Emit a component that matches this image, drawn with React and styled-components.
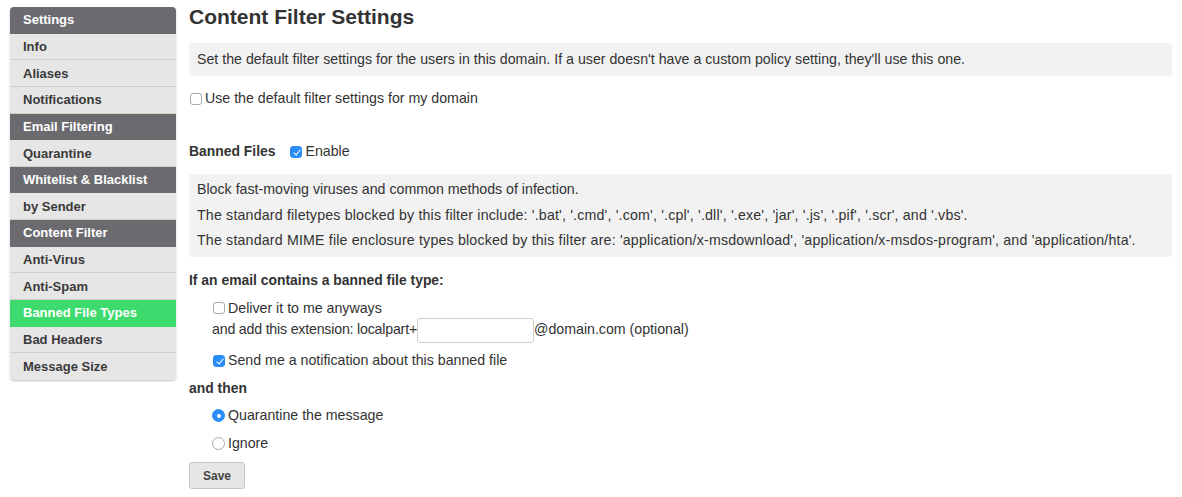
import React from 'react';
import styled, { createGlobalStyle } from 'styled-components';

const GlobalStyle = createGlobalStyle`
  body {
    margin: 0;
    background: #ffffff;
    font-family: "Liberation Sans", Arial, Helvetica, sans-serif;
    color: #333333;
  }
`;

const menu = [
  { label: 'Settings', kind: 'head' },
  { label: 'Info' },
  { label: 'Aliases' },
  { label: 'Notifications' },
  { label: 'Email Filtering', kind: 'head' },
  { label: 'Quarantine' },
  { label: 'Whitelist & Blacklist', kind: 'head' },
  { label: 'by Sender' },
  { label: 'Content Filter', kind: 'head' },
  { label: 'Anti-Virus' },
  { label: 'Anti-Spam' },
  { label: 'Banned File Types', kind: 'active' },
  { label: 'Bad Headers' },
  { label: 'Message Size' },
];

function App() {
  return (
    <>
      <GlobalStyle />
      <Page>
        <Sidebar>
          {menu.map((item) => (
            <MenuItem key={item.label} kind={item.kind}>{item.label}</MenuItem>
          ))}
        </Sidebar>

        <Main>
          <Title>Content Filter Settings</Title>
          <InfoBox>
            Set the default filter settings for the users in this domain. If a user doesn't have a custom policy setting, they'll use this one.
          </InfoBox>

          <CheckLabel>
            <Check type="checkbox" />
            Use the default filter settings for my domain
          </CheckLabel>

          <SectionHead>
            <Strong>Banned Files</Strong>
            <CheckLabel>
              <Check type="checkbox" defaultChecked />
              Enable
            </CheckLabel>
          </SectionHead>

          <InfoBox lines>
            <Line>Block fast-moving viruses and common methods of infection.</Line>
            <Line wide>The standard filetypes blocked by this filter include: '.bat', '.cmd', '.com', '.cpl', '.dll', '.exe', 'jar', '.js', '.pif', '.scr', and '.vbs'.</Line>
            <Line wide>The standard MIME file enclosure types blocked by this filter are: 'application/x-msdownload', 'application/x-msdos-program', and 'application/hta'.</Line>
          </InfoBox>

          <Options>
            <Strong>If an email contains a banned file type:</Strong>
            <Indented>
              <CheckLabel>
                <Check type="checkbox" />
                Deliver it to me anyways
              </CheckLabel>
              <ExtRow>
                <ExtLabel>and add this extension: localpart+</ExtLabel>
                <TextInput type="text" />
                @domain.com (optional)
              </ExtRow>
            </Indented>
            <Indented>
              <CheckLabel>
                <Check type="checkbox" defaultChecked />
                Send me a notification about this banned file
              </CheckLabel>
            </Indented>
            <Strong>and then</Strong>
            <Indented>
              <CheckLabel>
                <Radio type="radio" name="then" defaultChecked />
                Quarantine the message
              </CheckLabel>
            </Indented>
            <Indented>
              <CheckLabel>
                <Radio type="radio" name="then" />
                Ignore
              </CheckLabel>
            </Indented>
            <SaveButton type="button">Save</SaveButton>
          </Options>
        </Main>
      </Page>
    </>
  );
}

const Page = styled.div`
  display: flex;
  align-items: flex-start;
  padding: 7px 10px 0 10px;
  gap: 13px;
`;

const Sidebar = styled.nav`
  width: 166px;
  flex-shrink: 0;
  display: flex;
  flex-direction: column;
  border-radius: 4px;
  overflow: hidden;
  box-shadow: 0 1px 2px rgba(0, 0, 0, 0.25);
`;

const MenuItem = styled.div`
  height: 26.65px;
  box-sizing: border-box;
  display: flex;
  align-items: center;
  padding-left: 13px;
  font-size: 13px;
  font-weight: bold;
  color: ${(p) => (p.kind === 'head' || p.kind === 'active' ? '#ffffff' : '#3a3a3a')};
  background: ${(p) =>
    p.kind === 'head' ? '#6b6b6f' : p.kind === 'active' ? '#3ddb6d' : '#e6e6e6'};
  border-bottom: 1px solid ${(p) => (p.kind === 'head' || p.kind === 'active' ? 'transparent' : '#cfcfc6')};

  &:last-child {
    border-bottom: none;
  }
`;

const Main = styled.main`
  flex: 1;
  display: flex;
  flex-direction: column;
  font-size: 14.2px;
  line-height: 17px;
`;

const Title = styled.h1`
  margin: -2px 0 0 0;
  font-size: 21px;
  line-height: 24px;
  font-weight: bold;
  color: #333333;
`;

const InfoBox = styled.div`
  margin-top: 14px;
  background: #f2f2f2;
  border-radius: 3px;
  padding: ${(p) => (p.lines ? '7px 8px 8px' : '8px 8px')};
  display: flex;
  flex-direction: column;
  gap: 8.5px;
  color: #333333;

  & + label {
    margin-top: 14px;
  }
`;

const Line = styled.div`
  letter-spacing: ${(p) => (p.wide ? '0.18px' : '0')};
`;

const CheckLabel = styled.label`
  display: flex;
  align-items: center;
  gap: 3px;
  color: #333333;
`;

const Check = styled.input`
  appearance: none;
  margin: 0 0 0 1px;
  width: 12px;
  height: 12px;
  border-radius: 3px;
  border: 1px solid #a9a9a9;
  background: #ffffff;
  box-sizing: border-box;
  position: relative;
  flex-shrink: 0;

  &:checked {
    border-color: #2a8cf6;
    background: #2a8cf6;
  }

  &:checked::after {
    content: '';
    position: absolute;
    left: 3.5px;
    top: 1px;
    width: 3px;
    height: 6px;
    border: solid #ffffff;
    border-width: 0 1.5px 1.5px 0;
    transform: rotate(40deg);
  }
`;

const Radio = styled.input`
  appearance: none;
  margin: 0;
  width: 13px;
  height: 13px;
  border-radius: 50%;
  border: 1px solid #a9a9a9;
  background: #ffffff;
  box-sizing: border-box;
  position: relative;
  flex-shrink: 0;

  &:checked {
    border-color: #2a8cf6;
    background: #2a8cf6;
  }

  &:checked::after {
    content: '';
    position: absolute;
    left: 3.5px;
    top: 3.5px;
    width: 4px;
    height: 4px;
    border-radius: 50%;
    background: #ffffff;
  }
`;

const SectionHead = styled.div`
  margin-top: 36px;
  display: flex;
  align-items: center;
  gap: 14px;
`;

const Strong = styled.div`
  font-weight: bold;
  font-size: 13.9px;
  color: #333333;
`;

const Options = styled.div`
  margin-top: 15px;
  display: flex;
  flex-direction: column;
  align-items: flex-start;
  gap: 10.5px;
`;

const Indented = styled.div`
  padding-left: 23px;
  display: flex;
  flex-direction: column;
`;

const ExtRow = styled.div`
  display: flex;
  align-items: center;
  height: 25px;
`;

const ExtLabel = styled.span`
  letter-spacing: -0.2px;
`;

const TextInput = styled.input`
  width: 117px;
  height: 25px;
  box-sizing: border-box;
  margin: 0;
  border: 1px solid #cfcfc6;
  border-radius: 3px;
  background: #ffffff;
  font-size: 13px;
  padding: 0 5px;
  margin-top: 3px;
`;

const SaveButton = styled.button`
  width: 56px;
  height: 27px;
  margin-top: 0;
  border: 1px solid #c6c6c6;
  border-radius: 3px;
  background: #e6e6e6;
  font-family: "Liberation Sans", Arial, sans-serif;
  font-size: 12px;
  font-weight: bold;
  color: #444444;
  padding: 0;
`;

export default App;
